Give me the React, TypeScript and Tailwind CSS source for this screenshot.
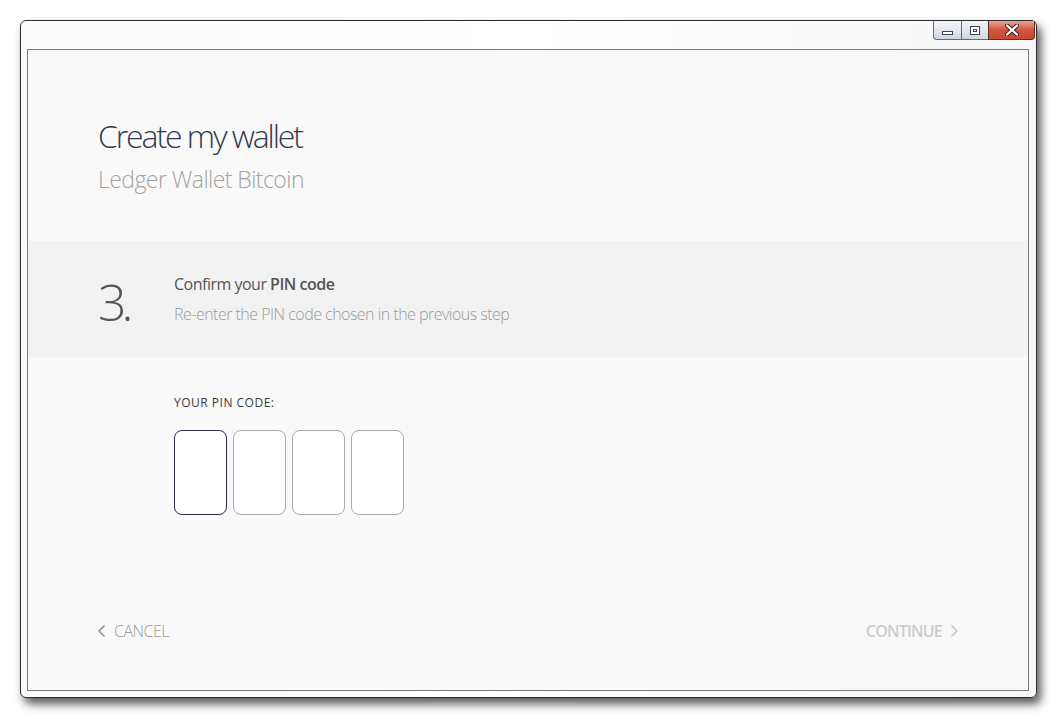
import { ReactNode } from 'react'

function CaptionButtons() {
  return (
    <div className="absolute top-0 right-[1px] flex h-[19px]">
      <div className="w-[28px] flex items-end justify-center pb-[4px] border border-t-0 border-r-0 border-[#5f6b7c] rounded-bl-[4px] bg-gradient-to-b from-[#f4f6f8] via-[#e4e8ed] to-[#cfd5dd]">
        <div className="w-[11px] h-[4px] border border-[#3d4452] bg-white" />
      </div>
      <div className="w-[27px] flex items-center justify-center border border-t-0 border-r-0 border-[#5f6b7c] bg-gradient-to-b from-[#f4f6f8] via-[#e4e8ed] to-[#cfd5dd]">
        <div className="w-[10px] h-[9px] border border-[#3d4452] bg-white flex items-center justify-center">
          <div className="w-[4px] h-[3px] border border-[#3d4452]" />
        </div>
      </div>
      <div className="w-[47px] flex items-center justify-center border border-t-0 border-[#6b2a22] rounded-br-[4px] bg-gradient-to-b from-[#e8a493] via-[#d0533c] to-[#c94a33]">
        <svg width="14" height="12" viewBox="0 0 14 12">
          <path d="M2 1.5 L12 10.5 M12 1.5 L2 10.5" stroke="#3b2a28" strokeWidth="4.2" strokeLinecap="round" />
          <path d="M2 1.5 L12 10.5 M12 1.5 L2 10.5" stroke="#ffffff" strokeWidth="2.2" strokeLinecap="round" />
        </svg>
      </div>
    </div>
  )
}

function PinBox({ active }: { active?: boolean }) {
  return (
    <div
      className={
        active
          ? 'w-[53px] h-[85px] rounded-[8px] border border-[#2b3048] bg-white'
          : 'w-[53px] h-[85px] rounded-[8px] border border-[#ababab] bg-white'
      }
    />
  )
}

function Chevron({ dir, color }: { dir: 'left' | 'right'; color: string }): ReactNode {
  return (
    <svg width="7" height="12" viewBox="0 0 7 12" fill="none" stroke={color} strokeWidth="1.6" strokeLinecap="round" strokeLinejoin="round">
      {dir === 'left' ? <path d="M6 1 L1 6 L6 11" /> : <path d="M1 1 L6 6 L1 11" />}
    </svg>
  )
}

export default function App() {
  return (
    <div className="w-[1057px] h-[719px] bg-white pt-[20px] pl-[20px] font-['Open_Sans',sans-serif]">
      <div className="relative w-[1017px] h-[678px] rounded-[6px] border border-[#2c2c2c] bg-gradient-to-r from-[#fbfbfb] via-[#ffffff] to-[#f7f7f7] pt-[28px] pl-[6px] shadow-[4px_6px_10px_rgba(0,0,0,0.65)]">
        <CaptionButtons />
        <div className="w-[1002px] h-[642px] border border-[#7b7b7b] bg-[#f9f9f9] flex flex-col">
          {/* header */}
          <div className="h-[191px] pl-[70px] pt-[66px]">
            <h1 className="text-[32px] leading-[40px] font-light text-[#343a4c] tracking-[-2.1px]">Create my wallet</h1>
            <p className="mt-[8px] text-[23px] leading-[30px] font-light text-[#a3a3a3] tracking-[-0.55px]">Ledger Wallet Bitcoin</p>
          </div>

          {/* step band */}
          <div className="h-[116px] bg-[#f2f2f2] flex pl-[70px]">
            <div className="w-[76px] pt-[36px] text-[50px] leading-[50px] font-light text-[#555555] tracking-[-5px]">3.</div>
            <div className="pt-[32px]">
              <p className="text-[16px] leading-[22px] text-[#555555] tracking-[-0.5px]">
                Confirm your <span className="font-semibold">PIN code</span>
              </p>
              <p className="mt-[8px] text-[16px] leading-[22px] font-light text-[#9a9a9a] tracking-[-0.52px]">
                Re-enter the PIN code chosen in the previous step
              </p>
            </div>
          </div>

          {/* pin */}
          <div className="pl-[146px] pt-[38px]">
            <p className="text-[12px] leading-[16px] text-[#3c3c3c] tracking-[0.5px]">YOUR PIN CODE:</p>
            <div className="mt-[19px] flex gap-[6px]">
              <PinBox active />
              <PinBox />
              <PinBox />
              <PinBox />
            </div>
          </div>

          <div className="flex-1" />

          {/* footer */}
          <div className="flex items-center justify-between px-[70px] pb-[48px]">
            <button className="flex items-center gap-[9px] text-[16px] leading-[22px] font-light text-[#9b9b9b] tracking-[-0.5px]">
              <Chevron dir="left" color="#8f8f8f" />
              CANCEL
            </button>
            <button className="flex items-center gap-[9px] text-[16px] leading-[22px] font-semibold text-[#cccccc] tracking-[-0.8px]">
              CONTINUE
              <Chevron dir="right" color="#c4c4c4" />
            </button>
          </div>
        </div>
      </div>
    </div>
  )
}
